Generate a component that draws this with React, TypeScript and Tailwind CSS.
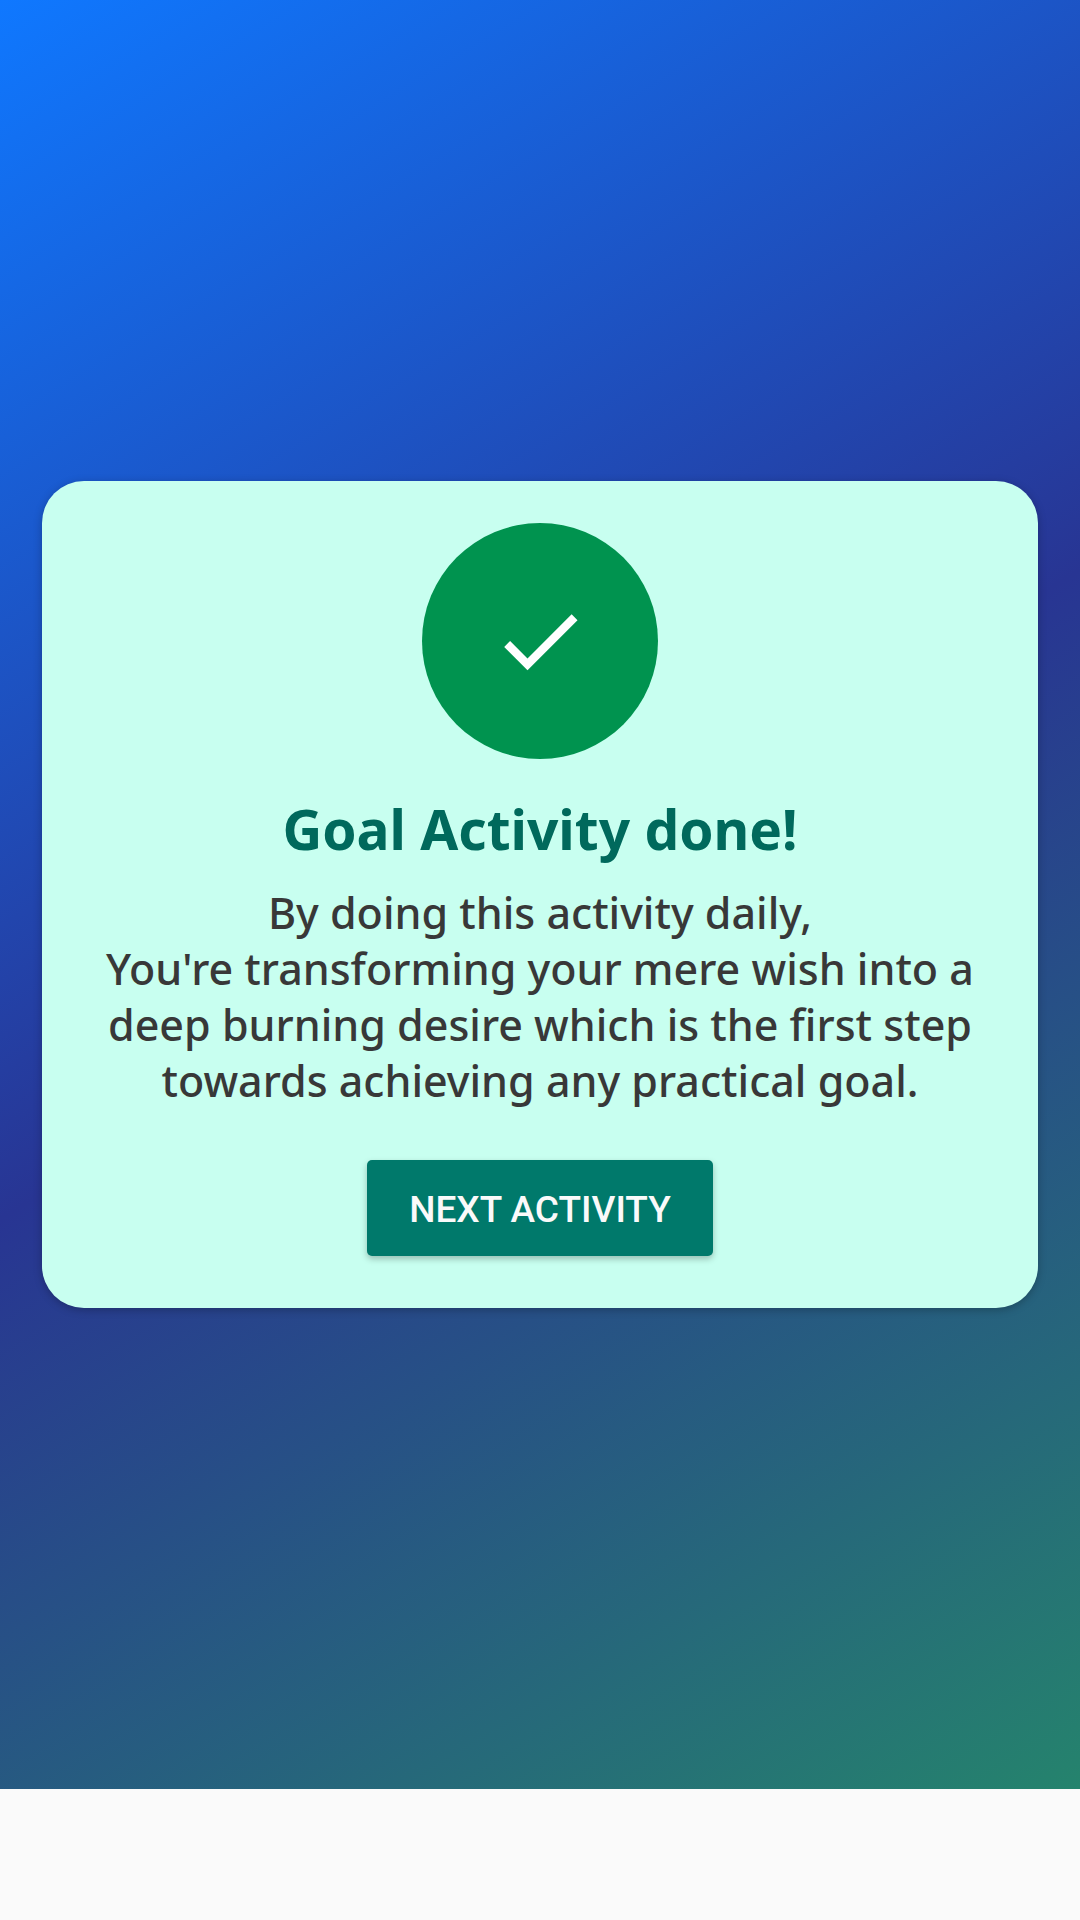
export default function App() {
  return (
    <div className="flex min-h-screen flex-col bg-[#fafafa]">
      <main className="flex flex-1 flex-col items-center justify-center bg-[linear-gradient(149deg,#0f78ff_0%,#283593_50%,#25836d_100%)] px-[42px]">
        <section className="flex w-full flex-col items-center rounded-[42px] bg-[#c8fff0] px-[42px] pt-[42px] pb-[52px] shadow-[0_2px_8px_rgba(0,0,0,0.25)]">
          <div className="flex size-[236px] items-center justify-center rounded-full bg-[#00934f]">
            <svg viewBox="0 0 24 24" className="size-[100px]" fill="#fff" aria-hidden="true">
              <path d="M9 16.17L4.83 12l-1.42 1.41L9 19 21 7l-1.41-1.41z" />
            </svg>
          </div>
          <h1 className="mt-[34px] text-center font-['Noto_Sans',sans-serif] text-[55px] leading-[72px] font-bold text-[#00695c]">
            Goal Activity done!
          </h1>
          <p className="mt-[20px] text-center font-['Noto_Sans',sans-serif] text-[43px] leading-[56px] font-medium text-[#383838]">
            By doing this activity daily,{" "}
            <br />
            You're transforming your mere wish into a deep burning desire which is the first step towards achieving any practical goal.
          </p>
          <button
            type="button"
            className="mt-[51px] h-[96px] rounded-[5px] bg-[#00796b] px-[42px] pt-[4px] font-[Roboto,sans-serif] text-[37px] leading-[48px] font-medium text-[#fafafa] shadow-[0_3px_6px_rgba(0,0,0,0.25)]"
          >
            NEXT ACTIVITY
          </button>
        </section>
      </main>
      <footer className="h-[131px] shrink-0 bg-[#fafafa]" />
    </div>
  );
}
